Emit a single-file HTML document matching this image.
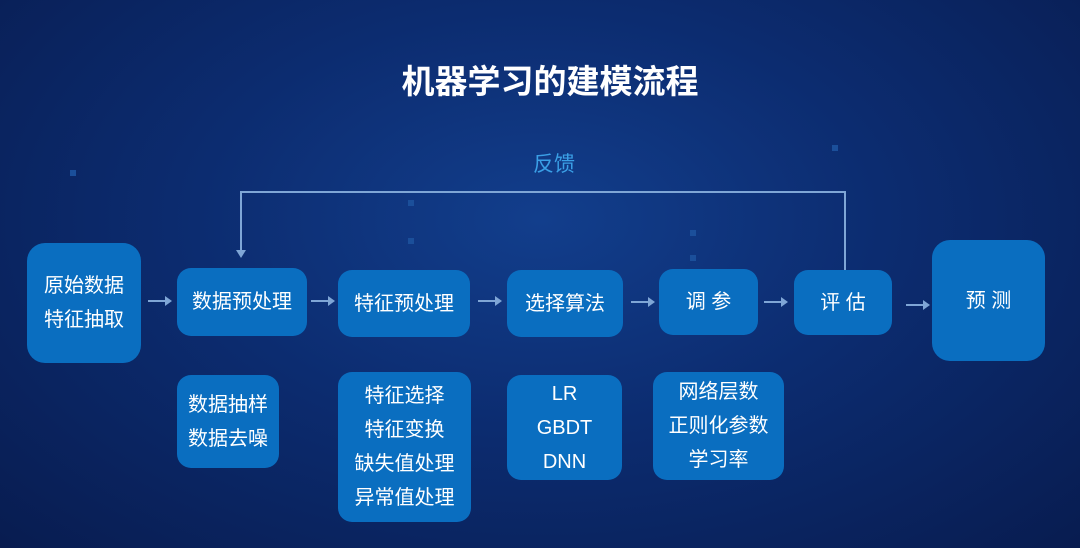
<!DOCTYPE html>
<html><head><meta charset="utf-8"><style>
body{margin:0;width:1080px;height:548px;overflow:hidden;font-family:"Liberation Sans","Noto Sans CJK SC",sans-serif;}
#bg{position:absolute;left:0;top:0;width:1080px;height:548px;background:radial-gradient(ellipse at 50% 40%,#123e8c 0%,#0c2c70 45%,#081c50 100%);}
.b{position:absolute;background:#0a6ec0;border-radius:14px;color:#fff;display:flex;flex-direction:column;align-items:center;justify-content:center;font-size:20px;line-height:34px;text-align:center;}
.a{position:absolute;height:2px;background:#7fa6d6;width:18px;}
.a:after{content:"";position:absolute;right:-6px;top:-4px;border-left:7px solid #7fa6d6;border-top:5px solid transparent;border-bottom:5px solid transparent;}
.d{position:absolute;width:6px;height:6px;background:#1b4f9a;}
</style></head><body>
<div id="bg"></div>
<div class="d" style="left:70px;top:170px"></div><div class="d" style="left:408px;top:200px"></div><div class="d" style="left:408px;top:238px"></div><div class="d" style="left:690px;top:230px"></div><div class="d" style="left:690px;top:255px"></div><div class="d" style="left:832px;top:145px"></div>
<div style="position:absolute;left:0;top:55px;width:1100px;text-align:center;color:#fff;font-size:33px;font-weight:bold;">机器学习的建模流程</div>
<div style="position:absolute;left:533px;top:148px;color:#3a9fe6;font-size:21px;">反馈</div>
<div style="position:absolute;left:240px;top:191px;width:605px;height:2px;background:#7fa6d6"></div>
<div style="position:absolute;left:240px;top:191px;width:2px;height:60px;background:#7fa6d6"></div>
<div style="position:absolute;left:236px;top:250px;border-top:8px solid #7fa6d6;border-left:5px solid transparent;border-right:5px solid transparent"></div>
<div style="position:absolute;left:844px;top:191px;width:2px;height:80px;background:#7fa6d6"></div>
<div class="b" style="left:27px;top:243px;width:114px;height:120px;border-radius:18px">原始数据<br>特征抽取</div>
<div class="b" style="left:177px;top:268px;width:130px;height:68px">数据预处理</div>
<div class="b" style="left:338px;top:270px;width:132px;height:67px">特征预处理</div>
<div class="b" style="left:507px;top:270px;width:116px;height:67px">选择算法</div>
<div class="b" style="left:659px;top:269px;width:99px;height:66px">调 参</div>
<div class="b" style="left:794px;top:270px;width:98px;height:65px">评 估</div>
<div class="b" style="left:932px;top:240px;width:113px;height:121px;border-radius:18px">预 测</div>
<div class="a" style="left:148px;top:300px"></div>
<div class="a" style="left:311px;top:300px"></div>
<div class="a" style="left:478px;top:300px"></div>
<div class="a" style="left:631px;top:301px"></div>
<div class="a" style="left:764px;top:301px"></div>
<div class="a" style="left:906px;top:304px"></div>
<div class="b" style="left:177px;top:375px;width:102px;height:93px">数据抽样<br>数据去噪</div>
<div class="b" style="left:338px;top:372px;width:133px;height:150px">特征选择<br>特征变换<br>缺失值处理<br>异常值处理</div>
<div class="b" style="left:507px;top:375px;width:115px;height:105px">LR<br>GBDT<br>DNN</div>
<div class="b" style="left:653px;top:372px;width:131px;height:108px">网络层数<br>正则化参数<br>学习率</div>
</body></html>
